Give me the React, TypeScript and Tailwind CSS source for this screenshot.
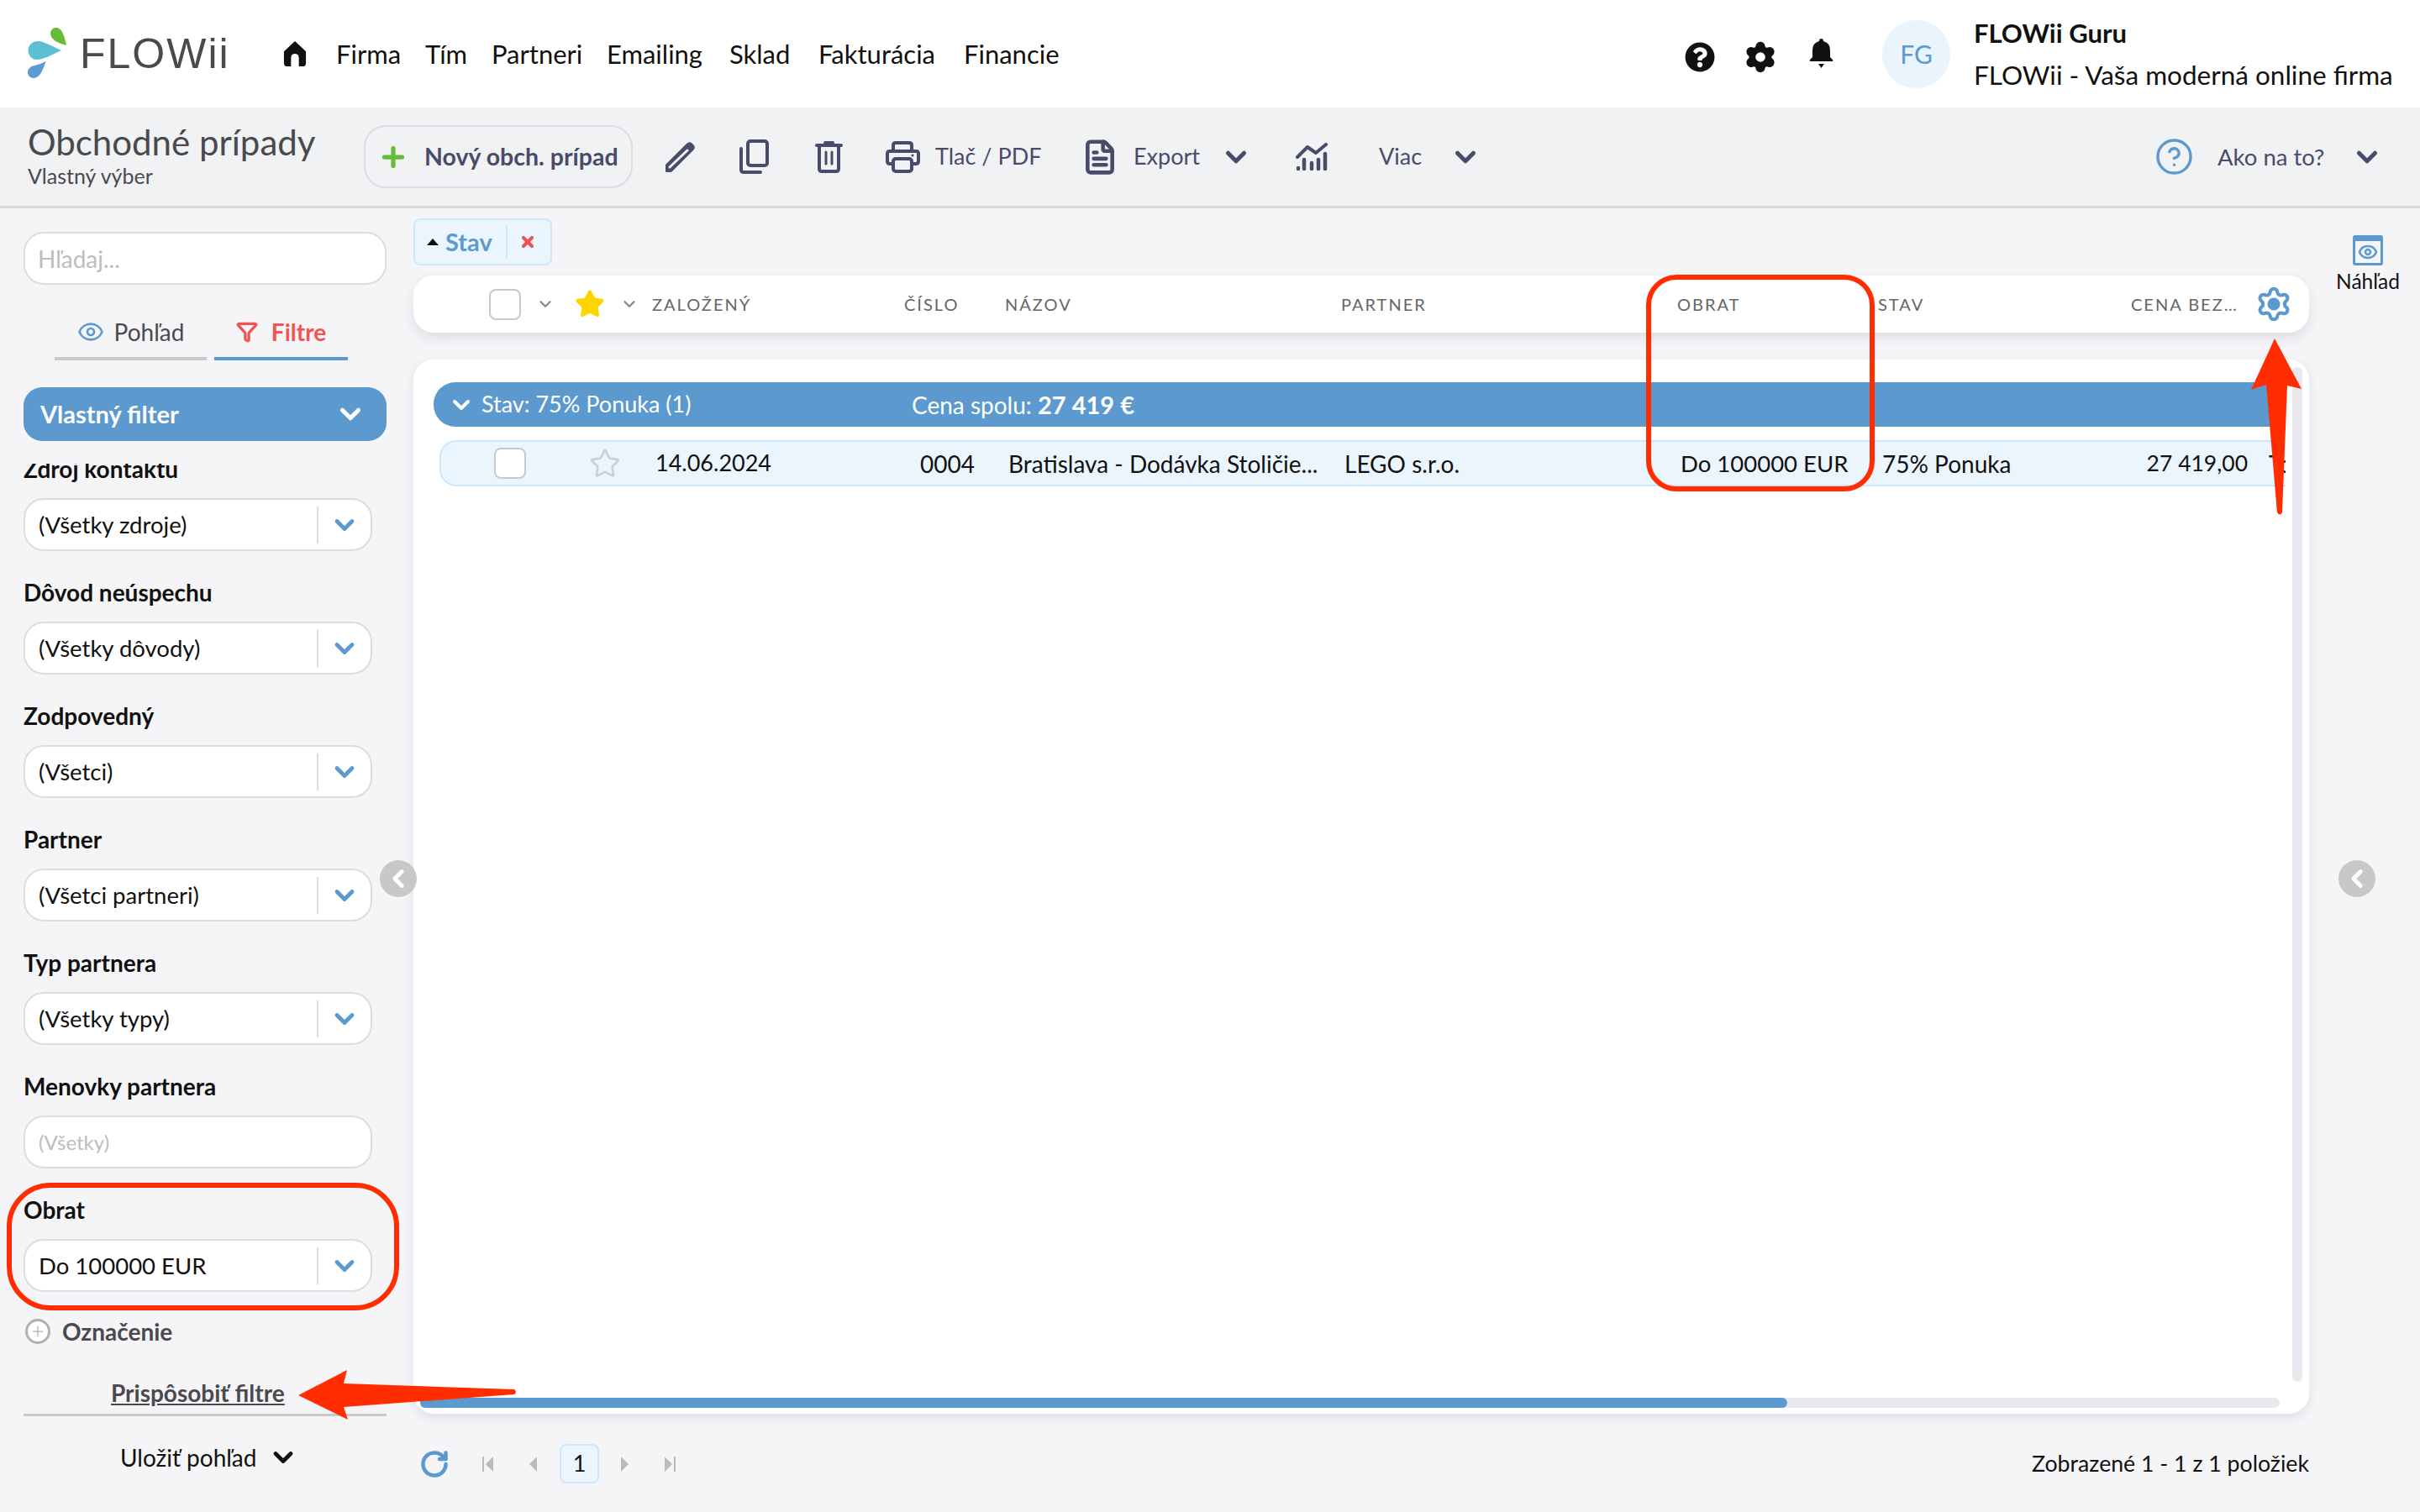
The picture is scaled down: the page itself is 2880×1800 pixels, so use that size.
import { Eye, Filter, ChevronDown, ChevronLeft, CircleHelp, Settings, RotateCw, Plus, X, Star, FileText } from "lucide-react";
import { FaQuestionCircle } from "react-icons/fa";

const nav = [
  { label: "Firma", w: "w-[106px]" },
  { label: "Tím", w: "w-[79px]" },
  { label: "Partneri", w: "w-[137px]" },
  { label: "Emailing", w: "w-[146px]" },
  { label: "Sklad", w: "w-[106px]" },
  { label: "Fakturácia", w: "w-[173px]" },
  { label: "Financie", w: "w-[120px]" },
];

const filters = [
  { label: "Zdroj kontaktu", value: "(Všetky zdroje)" },
  { label: "Dôvod neúspechu", value: "(Všetky dôvody)" },
  { label: "Zodpovedný", value: "(Všetci)" },
  { label: "Partner", value: "(Všetci partneri)" },
  { label: "Typ partnera", value: "(Všetky typy)" },
];

function Logo() {
  return (
    <div className="flex items-center w-[337px] pl-[33px] shrink-0">
      <svg width="50" height="64" viewBox="33 33 50 64" className="shrink-0">
        <path d="M79 55C70 53 60 48 60 41C60 36 64 33.5 68 34C74 35 77 45 79 55Z" fill="#66bb38" />
        <path d="M73 61C62 66 52 72 44 72C37 72 33.5 66 33.5 61C33.5 55 38 50 45 50C52 50 62 56 73 61Z" fill="#5cc0d4" />
        <path d="M54.5 74C52 82 48 94 40 94C36 94 33 91 33 87C33 83 36 80 41 79C46 78 50 76 54.5 74Z" fill="#5f9bd3" />
      </svg>
      <span className="ml-[12px] text-[50px] leading-none tracking-[2px] text-[#4a4a4a] font-['Liberation_Sans',sans-serif]">FLOWii</span>
    </div>
  );
}

function HomeIcon() {
  return (
    <svg width="28" height="32" viewBox="0 0 30 32" className="shrink-0">
      <path fillRule="evenodd" d="M15 0L29 13V28C29 30 28 32 26 32H20V21C20 18 18 16 15 16C12 16 10 18 10 21V32H4C2 32 1 30 1 28V13Z" fill="#111" />
    </svg>
  );
}

function BellIcon() {
  return (
    <svg width="29" height="36" viewBox="0 0 29 36" fill="#111" className="shrink-0">
      <path d="M14.5 0Q17 0 17 3Q25 5 25 14V22L28 25Q29 27 27 27H2Q0 27 1 25L4 22V14Q4 5 12 3Q12 0 14.5 0Z" />
      <path d="M11 30H18L14.5 35Z" />
    </svg>
  );
}

function Header() {
  return (
    <header className="flex items-center h-[128px] bg-white shrink-0">
      <Logo />
      <HomeIcon />
      <nav className="flex ml-[35px] text-[31px] text-[#111]">
        {nav.map((n) => (
          <span key={n.label} className={n.w}>{n.label}</span>
        ))}
      </nav>
      <div className="ml-auto flex items-center">
        <FaQuestionCircle className="w-[36px] h-[36px] text-[#111] mt-[8px]" />
        <Settings className="w-[40px] h-[40px] text-[#111] fill-[#111] ml-[34px] mt-[8px]" strokeWidth={2}>
          <circle cx="12" cy="12" r="3.5" fill="#fff" stroke="none" />
        </Settings>
        <div className="ml-[38px]"><BellIcon /></div>
        <div className="w-[81px] h-[81px] ml-[58px] rounded-full bg-[#eaf4fd] flex items-center justify-center text-[30px] text-[#5b99ce]">FG</div>
        <div className="ml-[28px] w-[531px] flex flex-col gap-[19px] text-[31.5px] leading-[31px] text-[#111]">
          <span className="font-bold text-[31px]">FLOWii Guru</span>
          <span>FLOWii - Vaša moderná online firma</span>
        </div>
      </div>
    </header>
  );
}

function PencilIcon() {
  return (
    <svg width="37" height="38" viewBox="0 0 37 38" className="shrink-0">
      <path d="M1 36V28L26 3Q29 0 32 2L35 5Q37 8 34 11L9 36Q8 37 7 37H2Q1 37 1 36Z" fill="#4a4b6a" />
      <path d="M6 31L27 11" stroke="#f1f2f4" strokeWidth="3" strokeLinecap="round" />
    </svg>
  );
}

function CopyIcon() {
  return (
    <svg width="35" height="41" viewBox="0 0 35 41" fill="none" stroke="#4a4b6a" strokeWidth="4" strokeLinejoin="round" strokeLinecap="round" className="shrink-0">
      <rect x="10" y="2" width="23" height="29" rx="3" />
      <path d="M2 11V36Q2 39 5 39H25" />
    </svg>
  );
}

function TrashIcon() {
  return (
    <svg width="33" height="38" viewBox="0 0 33 38" fill="none" stroke="#4a4b6a" strokeWidth="4" strokeLinecap="round" strokeLinejoin="round" className="shrink-0">
      <path d="M2 5H31M12 2H21" />
      <path d="M5 5V33Q5 36 8 36H25Q28 36 28 33V5" />
      <path d="M13 13V27M20 13V27" strokeWidth="3" />
    </svg>
  );
}

function PrintIcon() {
  return (
    <svg width="41" height="38" viewBox="0 0 41 38" fill="none" stroke="#4a4b6a" strokeWidth="4" strokeLinejoin="round" className="shrink-0">
      <path d="M9 12V5Q9 2 12 2H28Q31 2 31 5V12" />
      <path d="M9 27H5Q2 27 2 24V15Q2 12 5 12H36Q39 12 39 15V24Q39 27 36 27H31" />
      <rect x="9" y="21" width="22" height="15" rx="3" />
      <circle cx="32" cy="17" r="1.6" fill="#4a4b6a" stroke="none" />
    </svg>
  );
}

function ChartIcon() {
  return (
    <svg width="38" height="33" viewBox="0 0 38 33" fill="none" stroke="#4a4b6a" strokeLinecap="round" strokeLinejoin="round" className="shrink-0">
      <path d="M2 17L14 5L24 12L36 2" strokeWidth="4" />
      <path d="M3 30V31M10 20V31M19 24V31M27 20V31M35 13V31" strokeWidth="4.5" />
    </svg>
  );
}

function Chevron({ className = "" }: { className?: string }) {
  return <ChevronDown className={`w-[38px] h-[38px] shrink-0 ${className}`} strokeWidth={3.2} />;
}

function Toolbar() {
  return (
    <div className="flex items-center h-[120px] bg-[#f1f2f4] border-b-[3px] border-[#d8d9dc] shrink-0 pl-[33px] text-[#4a4b6a]">
      <div className="w-[400px] flex flex-col mb-[6px]">
        <span className="text-[42px] leading-[50px] text-[#4a4a4e]">Obchodné prípady</span>
        <span className="text-[25px] leading-[30px] text-[#4a4a4e]">Vlastný výber</span>
      </div>
      <button className="w-[320px] h-[75px] rounded-[26px] border-2 border-[#dcdde3] flex items-center pl-[15px]">
        <Plus className="w-[36px] h-[36px] text-[#66bb38]" strokeWidth={3.5} />
        <span className="ml-[19px] text-[28.5px] font-bold whitespace-nowrap">Nový obch. prípad</span>
      </button>
      <div className="ml-[38px]"><PencilIcon /></div>
      <div className="ml-[52px]"><CopyIcon /></div>
      <div className="ml-[55px]"><TrashIcon /></div>
      <div className="ml-[51px]"><PrintIcon /></div>
      <span className="ml-[18px] w-[181px] text-[27px]">Tlač / PDF</span>
      <FileText className="w-[44px] h-[46px] -ml-[7px]" strokeWidth={2.5} />
      <span className="ml-[18px] w-[103px] text-[27px]">Export</span>
      <Chevron />
      <div className="ml-[52px]"><ChartIcon /></div>
      <span className="ml-[61px] w-[84px] text-[27px]">Viac</span>
      <Chevron />
      <div className="ml-auto flex items-center pr-[44px]">
        <CircleHelp className="w-[47px] h-[47px] text-[#5b99ce]" strokeWidth={1.75} />
        <span className="ml-[28px] w-[159px] text-[27.5px]">Ako na to?</span>
        <Chevron />
      </div>
    </div>
  );
}

function SelectBox({ value }: { value: string }) {
  return (
    <div className="h-[63px] w-[415px] rounded-[24px] border-2 border-[#dcdde3] bg-white flex items-center">
      <span className="flex-1 pl-[16px] text-[27.5px] text-[#111]">{value}</span>
      <div className="w-[64px] h-[44px] border-l-2 border-[#dcdde3] flex items-center justify-center">
        <ChevronDown className="w-[36px] h-[36px] text-[#5b99ce]" strokeWidth={3.2} />
      </div>
    </div>
  );
}

function Sidebar() {
  return (
    <aside className="w-[492px] shrink-0 flex flex-col pl-[28px] pr-[32px] pt-[28px]">
      <div className="h-[63px] rounded-[24px] border-2 border-[#dcdde3] bg-white flex items-center pl-[15px] text-[28px] text-[#bdbdbd]">Hľadaj...</div>
      <div className="flex mt-[34px] pl-[37px]">
        <div className="w-[181px] h-[56px] pb-[8px] border-b-4 border-[#c9c9c9] flex items-center justify-center gap-[12px] text-[28px] text-[#4a4a4e]">
          <Eye className="w-[32px] h-[32px] text-[#5b99ce]" strokeWidth={2} />
          Pohľad
        </div>
        <div className="w-[159px] ml-[9px] h-[56px] pb-[8px] border-b-4 border-[#5b99ce] flex items-center justify-center gap-[16px] text-[28px] font-bold text-[#f25454]">
          <Filter className="w-[26px] h-[26px]" strokeWidth={3} />
          Filtre
        </div>
      </div>
      <div className="mt-[32px] h-[64px] shrink-0 rounded-[22px] bg-[#5b99ce] flex items-center justify-between pl-[20px] pr-[24px] text-white text-[29px] font-bold">
        Vlastný filter
        <ChevronDown className="w-[38px] h-[38px]" strokeWidth={3.2} />
      </div>
      <div className="mt-[27px] flex-1 min-h-0 overflow-hidden">
        <div className="-mt-[12px]">
          {filters.map((f) => (
            <div key={f.label} className="mb-[31px]">
              <div className="h-[36px] flex items-center text-[28px] font-bold text-[#111]">{f.label}</div>
              <div className="mt-[17px]"><SelectBox value={f.value} /></div>
            </div>
          ))}
          <div className="mb-[31px]">
            <div className="h-[36px] flex items-center text-[28px] font-bold text-[#111]">Menovky partnera</div>
            <div className="mt-[17px] h-[63px] w-[415px] rounded-[24px] border-2 border-[#dcdde3] bg-white flex items-center pl-[16px] text-[24px] text-[#bdbdbd]">(Všetky)</div>
          </div>
          <div>
            <div className="h-[36px] flex items-center text-[28px] font-bold text-[#111]">Obrat</div>
            <div className="mt-[17px]"><SelectBox value="Do 100000 EUR" /></div>
          </div>
          <div className="mt-[29px] h-[36px] flex items-center text-[28px] font-bold text-[#4a4a4e]">
            <span className="ml-[2px] w-[30px] h-[30px] rounded-full border-[3px] border-[#b0b0b0] bg-white flex items-center justify-center">
              <Plus className="w-[20px] h-[20px] text-[#b0b0b0]" strokeWidth={1.5} />
            </span>
            <span className="ml-[14px]">Označenie</span>
          </div>
          <div className="mt-[37px] h-[36px] flex items-center pl-[104px] text-[28px] font-bold text-[#4a4a4e] underline">Prispôsobiť filtre</div>
          <div className="mt-[7px] border-t-[3px] border-[#c9c9c9]" />
          <div className="mt-[31px] h-[36px] flex items-center pl-[115px] text-[28px] text-[#111]">
            Uložiť pohľad
            <ChevronDown className="ml-[14px] w-[36px] h-[36px]" strokeWidth={3.2} />
          </div>
        </div>
      </div>
    </aside>
  );
}

function TableHeader() {
  const th = "text-[20px] tracking-[2px] text-[#666] shrink-0 truncate";
  return (
    <div className="h-[68px] rounded-[24px] bg-white shadow-[0_6px_14px_rgba(60,60,90,0.13)] flex items-center pl-[90px]">
      <div className="w-[38px] h-[37px] rounded-[8px] border-2 border-[#c8c8d4] bg-white shrink-0" />
      <ChevronDown className="ml-[18px] w-[22px] h-[22px] text-[#888] shrink-0" strokeWidth={2.5} />
      <Star className="ml-[24px] w-[36px] h-[36px] shrink-0 text-[#ffd500] fill-[#ffd500]" />
      <ChevronDown className="ml-[18px] w-[22px] h-[22px] text-[#888] shrink-0" strokeWidth={2.5} />
      <span className={`${th} ml-[16px] w-[300px]`}>ZALOŽENÝ</span>
      <span className={`${th} w-[120px]`}>ČÍSLO</span>
      <span className={`${th} w-[400px]`}>NÁZOV</span>
      <span className={`${th} w-[400px]`}>PARTNER</span>
      <span className={`${th} w-[239px]`}>OBRAT</span>
      <span className={`${th} w-[301px]`}>STAV</span>
      <span className={`${th} w-[130px]`}>CENA BEZ DPH</span>
      <Settings className="ml-[18px] w-[44px] h-[44px] text-[#5b99ce] shrink-0" strokeWidth={2.25}>
        <circle cx="12" cy="12" r="3" fill="#5b99ce" stroke="none" />
      </Settings>
    </div>
  );
}

function TableCard() {
  return (
    <div className="flex-1 min-h-0 mt-[32px] rounded-[24px] bg-white shadow-[0_4px_12px_rgba(60,60,90,0.12)] flex flex-col pt-[9px] pl-[8px] pb-[7px]">
      <div className="flex flex-1 min-h-0">
        <div className="flex-1 min-w-0 overflow-hidden pl-[16px] pr-[8px] pt-[18px] flex flex-col">
          <div className="h-[53px] shrink-0 rounded-l-[26px] bg-[#5b99ce] flex items-center text-white text-[27px] pl-[17px]">
            <ChevronDown className="w-[32px] h-[32px] shrink-0" strokeWidth={3} />
            <span className="ml-[8px] w-[512px] shrink-0">Stav: 75% Ponuka (1)</span>
            <span className="text-[28px]">Cena spolu: <b className="text-[29px]">27 419 €</b></span>
          </div>
          <div className="mt-[16px] ml-[7px] h-[55px] shrink-0 rounded-l-[20px] bg-[#ebf5fe] border-y-2 border-l-2 border-[#cfe6fb] flex items-center text-[28px] text-[#111] overflow-hidden whitespace-nowrap pl-[63px]">
            <div className="w-[38px] h-[37px] rounded-[8px] border-2 border-[#c8c8d4] bg-white shrink-0" />
            <Star className="ml-[75px] w-[38px] h-[38px] shrink-0 text-[#d0d0d0]" strokeWidth={1.75} />
            <span className="ml-[41px] w-[315px] shrink-0 text-[27px]">14.06.2024</span>
            <span className="w-[105px] shrink-0">0004</span>
            <span className="w-[400px] shrink-0">Bratislava - Dodávka Stoličie...</span>
            <span className="w-[400px] shrink-0">LEGO s.r.o.</span>
            <span className="w-[238px] shrink-0 text-[27.5px]">Do 100000 EUR</span>
            <span className="w-[300px] shrink-0 pl-[2px]">75% Ponuka</span>
            <span className="w-[137px] shrink-0 text-right text-[26.5px]">27 419,00</span>
            <span className="ml-[25px] shrink-0">Top</span>
          </div>
        </div>
        <div className="w-[12px] mr-[8px] mb-[19px] shrink-0 rounded-[6px] bg-[#e8e8ee]" />
      </div>
      <div className="h-[12px] mr-[35px] shrink-0 rounded-[6px] bg-[#e8e8ee]">
        <div className="h-full w-[1627px] rounded-[6px] bg-[#5b99ce]" />
      </div>
    </div>
  );
}

function Pagination() {
  return (
    <div className="h-[117px] shrink-0 flex items-center pl-[7px] pt-[2px]">
      <RotateCw className="w-[36px] h-[36px] text-[#5b99ce]" strokeWidth={3} />
      <svg width="13" height="18" viewBox="0 0 13 18" className="ml-[39px]"><path d="M0 0h2v18H0zM13 0v18L4 9z" fill="#bbb" /></svg>
      <svg width="9" height="18" viewBox="0 0 9 18" className="ml-[43px]"><path d="M9 0v18L0 9z" fill="#bbb" /></svg>
      <div className="ml-[27px] w-[47px] h-[47px] rounded-[8px] bg-[#ebf5fe] border-2 border-[#cfe6fb] flex items-center justify-center text-[27px] text-[#111]">1</div>
      <svg width="9" height="18" viewBox="0 0 9 18" className="ml-[26px]"><path d="M0 0v18L9 9z" fill="#bbb" /></svg>
      <svg width="13" height="18" viewBox="0 0 13 18" className="ml-[43px]"><path d="M11 0h2v18h-2zM0 0v18L9 9z" fill="#bbb" /></svg>
      <span className="ml-auto text-[26.7px] text-[#111]">Zobrazené 1 - 1 z 1 položiek</span>
    </div>
  );
}

function Annotations() {
  return (
    <>
      <div className="absolute left-[8px] top-[1408px] w-[467px] h-[152px] rounded-[52px] border-[6px] border-[#ff2d00]" />
      <div className="absolute left-[1959px] top-[327px] w-[272px] h-[258px] rounded-[36px] border-[6px] border-[#ff2d00]" />
      <svg className="absolute left-[340px] top-[1620px]" width="290" height="80" viewBox="340 1620 290 80">
        <path d="M355 1661L413 1631L409 1647L612 1654Q616 1657 612 1660L409 1675L414 1690Z" fill="#ff2d00" />
      </svg>
      <svg className="absolute left-[2670px] top-[400px]" width="80" height="220" viewBox="2670 400 80 220">
        <path d="M2707 403L2739 463L2722 459L2716 610Q2713 615 2710 610L2697 458L2679 464Z" fill="#ff2d00" />
      </svg>
    </>
  );
}

function CollapseButton({ className }: { className: string }) {
  return (
    <div className={`absolute top-[1024px] w-[44px] h-[44px] rounded-full bg-[#c8c8c8] flex items-center justify-center ${className}`}>
      <ChevronLeft className="w-[34px] h-[34px] text-white" strokeWidth={3.4} />
    </div>
  );
}

export default function App() {
  return (
    <div className="relative w-full h-screen overflow-hidden flex flex-col bg-[#f5f5f8] font-['Lato',sans-serif]">
      <Header />
      <Toolbar />
      <div className="flex flex-1 min-h-0">
        <Sidebar />
        <main className="w-[2256px] shrink-0 flex flex-col pt-[12px]">
          <div className="h-[56px] w-[165px] shrink-0 rounded-[8px] bg-[#ebf5fe] border-2 border-[#cfe6fb] flex items-center pl-[14px] text-[29px] font-bold text-[#5b99ce]">
            <svg width="14" height="8" viewBox="0 0 14 8" className="shrink-0"><path d="M7 0l7 8H0z" fill="#111" /></svg>
            <span className="ml-[8px] pr-[16px] border-r-2 border-[#cfe6fb] leading-[40px]">Stav</span>
            <X className="ml-[14px] w-[20px] h-[20px] text-[#ea5455]" strokeWidth={5} />
          </div>
          <div className="mt-[12px]"><TableHeader /></div>
          <TableCard />
          <Pagination />
        </main>
        <div className="flex-1 flex flex-col items-center pt-[32px] pl-[8px]">
          <div className="w-[36px] h-[36px] rounded-[3px] bg-[#5b99ce] border-t-[7px] border-[#5b99ce] relative">
            <span className="absolute inset-x-[3px] bottom-[3px] top-0 bg-[#f5f5f8] flex items-center justify-center">
              <Eye className="w-[24px] h-[24px] text-[#5b99ce]" strokeWidth={2.5} />
            </span>
          </div>
          <span className="mt-[1px] text-[24.5px] text-[#111]">Náhľad</span>
        </div>
      </div>
      <CollapseButton className="left-[452px]" />
      <CollapseButton className="left-[2783px]" />
      <Annotations />
    </div>
  );
}
